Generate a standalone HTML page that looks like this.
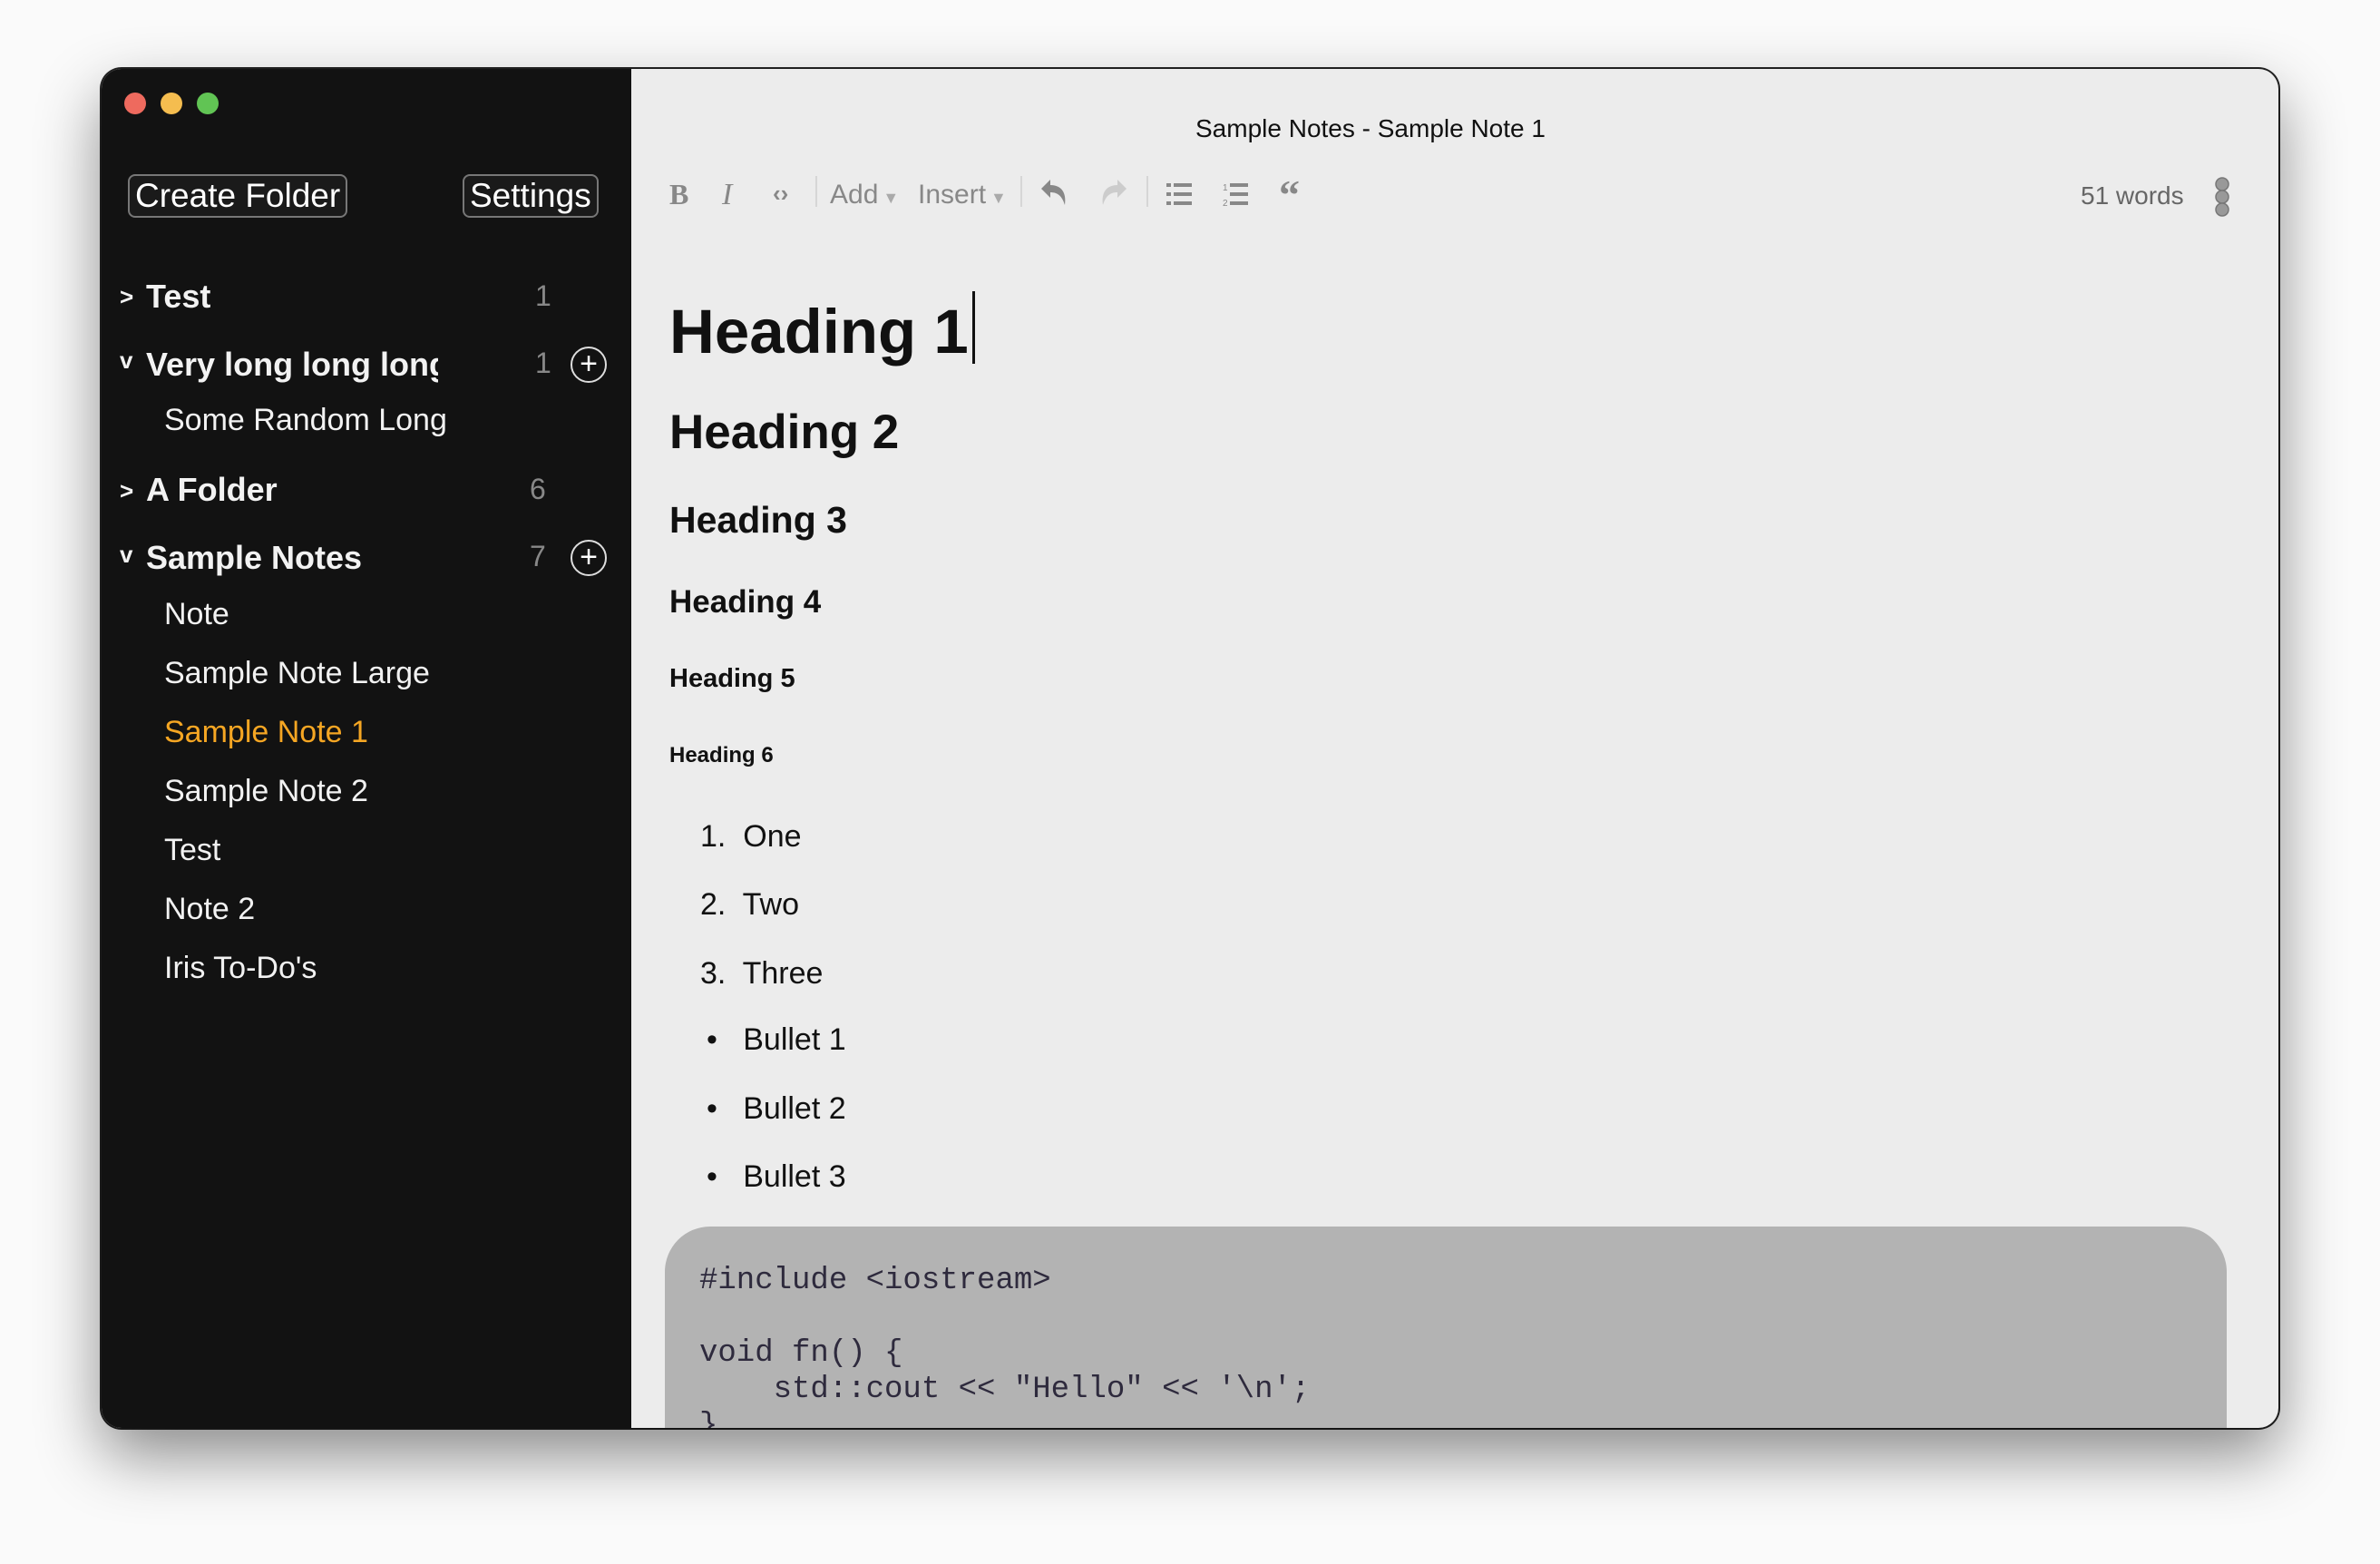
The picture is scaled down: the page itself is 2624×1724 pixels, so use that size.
<!DOCTYPE html>
<html><head><meta charset="utf-8"><style>
*{margin:0;padding:0;box-sizing:border-box}
body{width:2624px;height:1724px;background:#fafafa;position:relative;overflow:hidden;font-family:"Liberation Sans",sans-serif}
.win{position:absolute;left:112px;top:76px;width:2400px;height:1498px;border-radius:22px;overflow:hidden;background:#ececec;box-shadow:0 30px 70px rgba(0,0,0,.45),0 0 0 2px #222}
.side{position:absolute;left:0;top:0;width:584px;height:100%;background:#121212;color:#f2f2f2}
.a{position:absolute;white-space:nowrap}
.tl{position:absolute;top:26px;width:24px;height:24px;border-radius:50%}
.btn{position:absolute;top:116px;height:48px;border:2px solid #777;border-radius:8px;font-size:37px;line-height:44px;padding:0 6px;color:#fff;background:#1a1a1a}
.f{font-weight:bold;font-size:36px;overflow:hidden;width:340px}
.n{font-size:34px;overflow:hidden;width:312px}
.cnt{color:#888;font-size:32px}
.plus{position:absolute;width:40px;height:40px;border:2px solid #ddd;border-radius:50%;color:#fff;font-size:34px;line-height:34px;text-align:center}
.chev{font-size:26px;font-weight:bold}
.tb{color:#888;font-size:30px}
.sep{position:absolute;top:118px;width:2px;height:34px;background:#d6d6d6}
.c{color:#111;font-weight:bold}
.li{font-size:34px;color:#111}
pre{font-family:"Liberation Mono",monospace;font-size:34px;color:#2e2a3d;line-height:40px}
</style></head><body>
<div class="win">
<div class="side">
<div class="tl" style="left:25px;background:#ee6a5e"></div>
<div class="tl" style="left:65px;background:#f5bd4f"></div>
<div class="tl" style="left:105px;background:#61c454"></div>
<div class="btn" style="left:29px">Create Folder</div>
<div class="btn" style="left:398px">Settings</div>

<div class="a chev" style="left:20px;top:236px">&gt;</div>
<div class="a f" style="left:49px;top:230px">Test</div>
<div class="a cnt" style="left:478px;top:232px">1</div>

<div class="a chev" style="left:20px;top:306px">v</div>
<div class="a f" style="left:49px;top:305px;width:322px">Very long long long</div>
<div class="a cnt" style="left:478px;top:306px">1</div>
<div class="plus" style="left:517px;top:306px">+</div>
<div class="a n" style="left:69px;top:368px;width:311px">Some Random Long Note</div>

<div class="a chev" style="left:20px;top:450px">&gt;</div>
<div class="a f" style="left:49px;top:443px">A Folder</div>
<div class="a cnt" style="left:472px;top:445px">6</div>

<div class="a chev" style="left:20px;top:520px">v</div>
<div class="a f" style="left:49px;top:518px">Sample Notes</div>
<div class="a cnt" style="left:472px;top:519px">7</div>
<div class="plus" style="left:517px;top:519px">+</div>

<div class="a n" style="left:69px;top:582px">Note</div>
<div class="a n" style="left:69px;top:647px">Sample Note Large</div>
<div class="a n" style="left:69px;top:712px;color:#f5a623">Sample Note 1</div>
<div class="a n" style="left:69px;top:777px">Sample Note 2</div>
<div class="a n" style="left:69px;top:842px">Test</div>
<div class="a n" style="left:69px;top:907px">Note 2</div>
<div class="a n" style="left:69px;top:972px">Iris To-Do's</div>
</div>

<div class="a" style="left:1206px;top:50px;font-size:28px;color:#111">Sample Notes - Sample Note 1</div>

<div class="a tb" style="left:626px;top:120px;font-family:'Liberation Serif',serif;font-weight:bold;font-size:32px">B</div>
<div class="a tb" style="left:684px;top:120px;font-family:'Liberation Serif',serif;font-style:italic;font-size:34px">I</div>
<div class="a tb" style="left:740px;top:122px;font-size:26px;font-weight:bold">&lsaquo;&rsaquo;</div>
<div class="sep" style="left:787px"></div>
<div class="a tb" style="left:803px;top:122px">Add<span style="font-size:18px;color:#aaa"> ▼</span></div>
<div class="a tb" style="left:900px;top:122px">Insert<span style="font-size:18px;color:#aaa"> ▼</span></div>
<div class="sep" style="left:1013px"></div>
<svg class="a" style="left:1034px;top:120px" width="32" height="36" viewBox="0 0 32 36"><path d="M2 12 L12 2 V8 C24 8 30 16 28 30 C25 20 20 16 12 16 V22 Z" fill="#888"/></svg>
<svg class="a" style="left:1100px;top:120px" width="32" height="36" viewBox="0 0 32 36"><path d="M30 12 L20 2 V8 C8 8 2 16 4 30 C7 20 12 16 20 16 V22 Z" fill="#ccc"/></svg>
<div class="sep" style="left:1152px"></div>
<svg class="a" style="left:1174px;top:124px" width="28" height="28" viewBox="0 0 28 28" fill="#888"><rect x="0" y="2" width="5" height="4"/><rect x="8" y="2" width="20" height="4"/><rect x="0" y="12" width="5" height="4"/><rect x="8" y="12" width="20" height="4"/><rect x="0" y="22" width="5" height="4"/><rect x="8" y="22" width="20" height="4"/></svg>
<svg class="a" style="left:1236px;top:124px" width="28" height="28" viewBox="0 0 28 28" fill="#888"><text x="0" y="10" font-size="10" font-family="Liberation Sans">1</text><text x="0" y="27" font-size="10" font-family="Liberation Sans">2</text><rect x="8" y="2" width="20" height="4"/><rect x="8" y="12" width="20" height="4"/><rect x="8" y="22" width="20" height="4"/></svg>
<div class="a" style="left:1298px;top:112px;font-size:46px;font-weight:bold;color:#888;font-family:'Liberation Serif',serif">“</div>

<div class="a" style="left:2182px;top:124px;font-size:28px;color:#666">51 words</div>
<svg class="a" style="left:2328px;top:118px" width="20" height="46" viewBox="0 0 20 46" fill="#999" stroke="#777" stroke-width="1.5"><circle cx="10" cy="9" r="7"/><circle cx="10" cy="23" r="7"/><circle cx="10" cy="37" r="7"/></svg>

<div class="a c" style="left:626px;top:245px;font-size:69px">Heading 1<span style="display:inline-block;width:3px;height:80px;background:#111;vertical-align:-12px;margin-left:4px"></span></div>
<div class="a c" style="left:626px;top:370px;font-size:53px">Heading 2</div>
<div class="a c" style="left:626px;top:474px;font-size:41px">Heading 3</div>
<div class="a c" style="left:626px;top:568px;font-size:35px">Heading 4</div>
<div class="a c" style="left:626px;top:656px;font-size:29px">Heading 5</div>
<div class="a c" style="left:626px;top:743px;font-size:24px">Heading 6</div>

<div class="a li" style="left:660px;top:827px">1.&nbsp; One</div>
<div class="a li" style="left:660px;top:902px">2.&nbsp; Two</div>
<div class="a li" style="left:660px;top:978px">3.&nbsp; Three</div>
<div class="a li" style="left:667px;top:1051px">•&nbsp;&nbsp; Bullet 1</div>
<div class="a li" style="left:667px;top:1127px">•&nbsp;&nbsp; Bullet 2</div>
<div class="a li" style="left:667px;top:1202px">•&nbsp;&nbsp; Bullet 3</div>

<div class="a" style="left:621px;top:1276px;width:1722px;height:300px;background:#b3b3b3;border-radius:50px 50px 0 0;padding:40px 38px">
<pre>#include &lt;iostream&gt;

void fn() {
    std::cout &lt;&lt; "Hello" &lt;&lt; '\n';
}</pre>
</div>
</div>
</body></html>
